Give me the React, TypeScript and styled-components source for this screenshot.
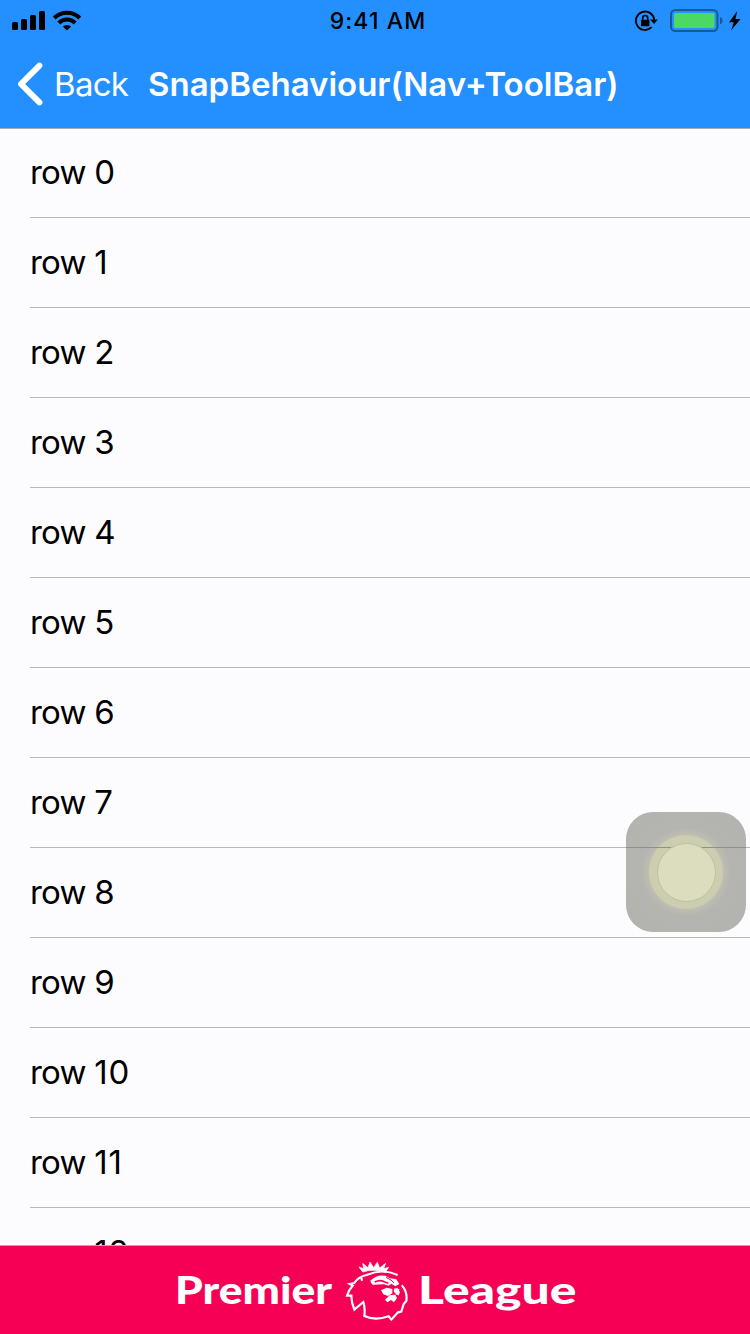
import React from "react";
import styled, { createGlobalStyle } from "styled-components";

const GlobalStyle = createGlobalStyle`
  * { box-sizing: border-box; }
  body { margin: 0; overflow: hidden; background: #fcfcff; }
`;

const Screen = styled.main`
  position: relative;
  display: flex;
  flex-direction: column;
  width: 750px;
  height: 1334px;
  overflow: hidden;
  background: #fcfcff;
  color: #000;
  font-family: Inter, "Liberation Sans", sans-serif;
`;

const Header = styled.header`
  flex: none;
  height: 129px;
  background: #2490ff;
  border-bottom: 1px solid #a9abb0;
`;

const StatusBar = styled.div`
  display: grid;
  grid-template-columns: 1fr auto 1fr;
  align-items: center;
  height: 40px;
  padding: 0 8px 0 11px;
`;

const StatusGroup = styled.div<{ $end?: boolean }>`
  display: flex;
  align-items: center;
  justify-content: ${(p) => (p.$end ? "flex-end" : "flex-start")};
  height: 40px;
`;

const WifiSlot = styled.span`
  display: flex;
  margin-left: 6px;
`;

const BatterySlot = styled.span`
  display: flex;
  margin: 1px 4px 0 12px;
`;

const Clock = styled.time`
  padding: 1px 0 0 3px;
  font-size: 23px;
  font-weight: 500;
  line-height: 40px;
  letter-spacing: 1.1px;
`;

const NavBar = styled.nav`
  display: flex;
  align-items: center;
  height: 88px;
  padding-left: 16px;
  color: #fff;
`;

const BackButton = styled.button`
  display: flex;
  align-items: center;
  padding: 0;
  border: 0;
  background: none;
  color: inherit;
  font: 400 33px/44px Inter, "Liberation Sans", sans-serif;
  letter-spacing: -0.7px;
`;

const BackLabel = styled.span`
  width: 104px;
  padding-left: 10px;
  text-align: left;
`;

const Title = styled.h1`
  margin: 0;
  font-size: 33px;
  font-weight: 600;
  line-height: 44px;
  letter-spacing: 0;
  white-space: nowrap;
`;

const List = styled.ul`
  flex: 1;
  min-height: 0;
  margin: -1px 0 0;
  padding: 0 0 0 30px;
  overflow: hidden;
  list-style: none;
`;

const Row = styled.li`
  height: 90px;
  border-bottom: 1px solid #b8b8b8;
  font-size: 33px;
  line-height: 88px;
  letter-spacing: -0.8px;
`;

const RowNumber = styled.span`
  letter-spacing: 0.8px;
`;

const ToolBar = styled.footer`
  flex: none;
  display: flex;
  height: 89px;
  padding-left: 175px;
  border-top: 1px solid #c9a0ac;
  background: #f50055;
  color: #fff;
`;

const BrandWord = styled.span<{ $width: number; $stretch: number }>`
  width: ${(p) => p.$width}px;
  font: 900 37px/88px Lato, "Liberation Sans", sans-serif;
  transform: scaleX(${(p) => p.$stretch});
  transform-origin: left;
  white-space: nowrap;
`;

const TouchButton = styled.div`
  position: absolute;
  left: 626px;
  top: 812px;
  display: grid;
  place-items: center;
  width: 120px;
  height: 120px;
  border-radius: 27px;
  background: radial-gradient(circle, #cdcdb0 0 36px, #bcbcb1 38px, #b4b4b0 46px, #b2b2ae 100%);
`;

const TouchLine = styled.div`
  position: absolute;
  left: 0;
  top: 35px;
  width: 100%;
  height: 1px;
  background: #8f8f8b;
`;

const TouchDot = styled.div`
  position: relative;
  width: 59px;
  height: 59px;
  border: 1px solid #bfbfa8;
  border-radius: 50%;
  background: #dcdcbf;
`;

const LionSlot = styled.div`
  width: 74px;
  padding-top: 13px;
`;

const Signal = () => (
  <svg width="35" height="22" viewBox="0 0 35 22">
    <rect x="1" y="12" width="6" height="8" rx="1.5" />
    <rect x="10" y="9" width="6" height="11" rx="1.5" />
    <rect x="19" y="5" width="6" height="15" rx="1.5" />
    <rect x="28" y="1" width="6" height="19" rx="1.5" />
  </svg>
);

const Wifi = () => (
  <svg width="30" height="22" viewBox="0 0 30 22">
    <g fill="none" stroke="#000" strokeWidth="4">
      <path d="M2.2 8a18.2 18.2 0 0 1 25.6 0" />
      <path d="M6.8 13a11.3 11.3 0 0 1 16.4 0" />
    </g>
    <path d="M15 20.6l-4.1-4a5.8 5.8 0 0 1 8.2 0z" />
  </svg>
);

const RotationLock = () => (
  <svg width="24" height="24" viewBox="0 0 24 24">
    <path d="M17.6 18.2a9.2 9.2 0 1 1 2.6-7.6" fill="none" stroke="#000" strokeWidth="1.9" />
    <path d="M16 10.4h7.8L20 15z" />
    <rect x="7" y="10.8" width="8.4" height="6.4" rx=".8" />
    <path d="M8.7 11V9a2.5 2.5 0 0 1 5 0v2" fill="none" stroke="#000" strokeWidth="1.6" />
  </svg>
);

const Battery = () => (
  <svg width="54" height="24" viewBox="0 0 54 24">
    <rect x="1" y="1" width="46.5" height="21" rx="4.5" fill="none" stroke="#1c5793" strokeWidth="2" />
    <rect x="4" y="4" width="40.5" height="15" rx="1" fill="#4bd964" />
    <path d="M50 8c3.4 1.4 3.4 6 0 7.4z" fill="#1c5793" />
  </svg>
);

const Bolt = () => (
  <svg width="14" height="20" viewBox="0 0 14 20">
    <path d="M9.3 0L1 11.2h4.8L3 19.6 12.6 8H7.4z" />
  </svg>
);

const Chevron = () => (
  <svg width="28" height="44" viewBox="0 0 28 44">
    <path d="M23.4 3.6L5 22l18.4 18.4" fill="none" stroke="#fff" strokeWidth="6" strokeLinecap="round" strokeLinejoin="round" />
  </svg>
);

const Lion = () => (
  <svg width="66" height="64" viewBox="42 57 198 192">
    <g fill="#fff">
      <path d="M98 96l-11-15 14 5-3-16 16 13 6-17 11 17 11-17 7 18 18-14-6 16 15-4-10 15q-34-12-68-1z" stroke="#fff" strokeWidth="2" />
      <path d="M121 122q19-19 45-15l14 8 19 3 9 14-12 7-12-8-8 6-14-4-34 1q-6-5-7-12z" />
      <path d="M153 151l17-8 17 4v13l-13 8-14-5zM193 145l15 3-1 13-8 3-8-10zM165 179l15-14 16-1 5 10-9 13-9-7-11 7z" />
    </g>
    <path d="M134 126q17-9 33 1l8 3" fill="none" stroke="#f50055" strokeWidth="5" />
    <path d="M168 112l15 8 9 9" fill="none" stroke="#f50055" strokeWidth="3" />
    <path d="M203 105q-45-21-93 0-25 5-37 24l-14 3 9 5q-13 14-17 30l13 0q0 20 9 42l27-23q6 17 3 42 32 15 73 1l8 10 20-22 10-2 7-23 8-9q4-29-14-47M93 108l3 14M199 145l7 12-3 8" fill="none" stroke="#fff" strokeWidth="6.5" strokeLinejoin="miter" />
  </svg>
);

const ROWS = Array.from({ length: 13 }, (_, i) => i);

export default function App() {
  return (
    <Screen>
      <GlobalStyle />
      <Header>
        <StatusBar>
          <StatusGroup>
            <Signal />
            <WifiSlot>
              <Wifi />
            </WifiSlot>
          </StatusGroup>
          <Clock>9:41 AM</Clock>
          <StatusGroup $end>
            <RotationLock />
            <BatterySlot>
              <Battery />
            </BatterySlot>
            <Bolt />
          </StatusGroup>
        </StatusBar>
        <NavBar>
          <BackButton>
            <Chevron />
            <BackLabel>Back</BackLabel>
          </BackButton>
          <Title>SnapBehaviour(Nav+ToolBar)</Title>
        </NavBar>
      </Header>
      <List>
        {ROWS.map((n) => (
          <Row key={n}>
            row <RowNumber>{n}</RowNumber>
          </Row>
        ))}
      </List>
      <ToolBar>
        <BrandWord $width={169} $stretch={1.2}>Premier</BrandWord>
        <LionSlot>
          <Lion />
        </LionSlot>
        <BrandWord $width={160} $stretch={1.345}>League</BrandWord>
      </ToolBar>
      <TouchButton>
        <TouchLine />
        <TouchDot />
      </TouchButton>
    </Screen>
  );
}
